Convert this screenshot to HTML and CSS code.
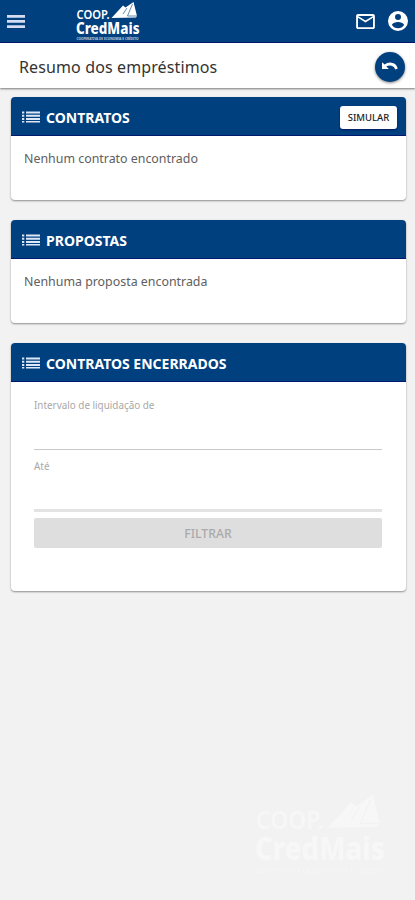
FILE: index.html
```html
<!DOCTYPE html>
<html lang="pt-BR">
<head>
<meta charset="utf-8">
<meta name="viewport" content="width=device-width, initial-scale=1">
<title>Resumo dos empréstimos</title>
<link rel="stylesheet" href="styles.css">
</head>
<body>
<svg class="defs" width="0" height="0" aria-hidden="true">
  <symbol id="list" viewBox="0 0 18 12">
    <path d="M0 .5h2.3v2H0zM4 .5h14v2H4zM0 3.7h2.3v2H0zM4 3.7h14v2H4zM0 6.9h2.3v2H0zM4 6.9h14v2H4zM0 10h2.3v1.6H0zM4 10h14v1.6H4z"/>
  </symbol>
</svg>
<header class="topbar">
  <svg class="menu" viewBox="0 0 18 13"><path d="M0 0h18v2.700H0zM0 5.100h18v2.700H0zM0 10.200h18v2.700H0z"/></svg>
  <svg class="logo" viewBox="0 0 64 40">
    <g id="logo">
      <path d="M35.500 16 L47 3.500 L49.500 5.500 L57.500 0 L61 14 L60 15.500 Z"/>
      <path class="cut" d="M51 6 L47 12 M56.500 2 L51.500 14 L61 14" fill="none"/>
      <text x="0.5" y="16.500" font-size="12.5" font-weight="600" textLength="33" lengthAdjust="spacingAndGlyphs">COOP.</text>
      <text x="0" y="31.500" font-size="16" font-weight="800" textLength="63.500" lengthAdjust="spacingAndGlyphs">CredMais</text>
      <text class="tagline" x="0.5" y="38" font-size="3.8" font-weight="700" textLength="62" lengthAdjust="spacingAndGlyphs">COOPERATIVA DE ECONOMIA E CRÉDITO</text>
    </g>
  </svg>
  <svg class="mail" viewBox="2 4 20 16"><path d="M22 6c0-1.1-.9-2-2-2H4c-1.100 0-2 .9-2 2v12c0 1.100.9 2 2 2h16c1.100 0 2-.9 2-2V6zm-2 0-8 5-8-5h16zm0 12H4V8l8 5 8-5v10z"/></svg>
  <svg class="account" viewBox="2 2 20 20"><path d="M12 2a10 10 0 1 0 0 20 10 10 0 0 0 0-20zm0 3a3 3 0 1 1 0 6 3 3 0 0 1 0-6zm0 14.200a7.200 7.200 0 0 1-6-3.220c.03-1.990 4-3.080 6-3.080s5.970 1.090 6 3.080a7.200 7.200 0 0 1-6 3.220z"/></svg>
</header>
<div class="titlebar">
  <h1>Resumo dos empréstimos</h1>
  <button class="back" aria-label="Voltar"><svg viewBox="2 7 21 10"><path d="M12.500 7.500c-2.650 0-5.050.99-6.900 2.600L2 7v9h9l-3.300-3.300A8 8 0 0 1 19.500 16.500l3.200-1.100A10.500 10.500 0 0 0 12.500 7.500z"/></svg></button>
</div>
<main>
  <section class="card">
    <div class="head"><svg><use href="#list"/></svg><h2>CONTRATOS</h2><button class="simulate">SIMULAR</button></div>
    <p class="empty">Nenhum contrato encontrado</p>
  </section>
  <section class="card">
    <div class="head"><svg><use href="#list"/></svg><h2>PROPOSTAS</h2></div>
    <p class="empty">Nenhuma proposta encontrada</p>
  </section>
  <section class="card closed">
    <div class="head"><svg><use href="#list"/></svg><h2>CONTRATOS ENCERRADOS</h2></div>
    <form>
      <label class="field from"><span>Intervalo de liquidação de</span></label>
      <label class="field to"><span>Até</span></label>
      <button class="filter" type="button" disabled>FILTRAR</button>
    </form>
  </section>
</main>
<svg class="watermark" viewBox="0 0 64 40"><use href="#logo"/></svg>
</body>
</html>
```
FILE: styles.css
```css
* { box-sizing: border-box; }
body {
  margin: 0;
  height: 900px;
  overflow: hidden;
  background: #f2f2f2;
  font-family: "Noto Sans", "Open Sans", sans-serif;
  color: #333;
}
h1, h2, p { margin: 0; white-space: nowrap; }
button { border: 0; padding: 0; font-family: inherit; }
svg { display: block; flex: none; }
.defs { position: absolute; }

.topbar {
  display: flex;
  align-items: center;
  height: 43px;
  padding: 0 7px 0 7px;
  background: #00407f;
  border-bottom: 1px solid #001870;
  fill: #fff;
}
.menu { width: 18px; height: 13px; fill: #d5dcf0; }
.logo { width: 64px; height: 40px; margin: 2px 0 0 51px; overflow: visible; --cut: #00407f; }
.mail { width: 19px; height: 15px; margin-left: auto; }
.account { width: 20px; height: 20px; margin-left: 13px; }
.cut { stroke: var(--cut); stroke-width: .6; }
.tagline { opacity: .7; }

.titlebar {
  display: flex;
  align-items: center;
  justify-content: space-between;
  height: 45px;
  padding: 2px 10px 0 19px;
  background: #fff;
  box-shadow: 0 1px 2px rgba(0, 0, 0, .5);
}
h1 { font-size: 16px; font-weight: 400; line-height: 24px; letter-spacing: .12px; color: #333; }
.back {
  display: flex;
  align-items: center;
  justify-content: center;
  width: 30px;
  height: 30px;
  padding-bottom: 2px;
  border-radius: 50%;
  background: #00407f;
  box-shadow: 0 1px 3px rgba(0, 0, 0, .5);
}
.back svg { width: 16px; height: 8px; fill: #fff; }

main { display: flex; flex-direction: column; gap: 20px; padding: 9px 9px 0 11px; }
.card {
  height: 103px;
  overflow: hidden;
  border-radius: 4px;
  background: #fff;
  box-shadow: 0 1px 2px rgba(0, 0, 0, .42);
}
.card.closed { height: 248px; }
.head {
  display: flex;
  align-items: center;
  height: 39px;
  padding: 3px 9px 0 11px;
  background: #00407f;
  border-bottom: 1px solid #001870;
}
.head svg { width: 18px; height: 12px; margin-bottom: 1px; fill: #dce8f8; }
h2 { margin-left: 6px; font-size: 14px; line-height: 20px; font-weight: 700; color: #fff; }
.simulate {
  width: 57px;
  height: 23px;
  margin-left: auto;
  border-radius: 3px;
  background: #fff;
  color: #222;
  font-size: 9.500px;
  font-weight: 500;
  box-shadow: 0 1px 2px #001560;
}
.empty { padding: 13px 13px 0; font-size: 12.400px; line-height: 20px; color: #606060; }

form { padding: 15px 24px 0 23px; }
.field { display: block; font-size: 9.900px; line-height: 16px; color: #a8a8a8; }
.from { height: 53px; border-bottom: 1px solid #c8c8c8; }
.to { height: 62px; padding-top: 8px; border-bottom: 3px solid #e3e3e3; }
.filter {
  display: block;
  width: 100%;
  height: 30px;
  margin-top: 6px;
  border-radius: 2px;
  background: #dedede;
  color: #aaa;
  font-size: 12.200px;
  font-weight: 500;
}
.watermark {
  position: absolute;
  left: 255px;
  top: 795px;
  width: 131px;
  height: 82px;
  fill: #f7f7f7;
  --cut: #f2f2f2;
}
```
